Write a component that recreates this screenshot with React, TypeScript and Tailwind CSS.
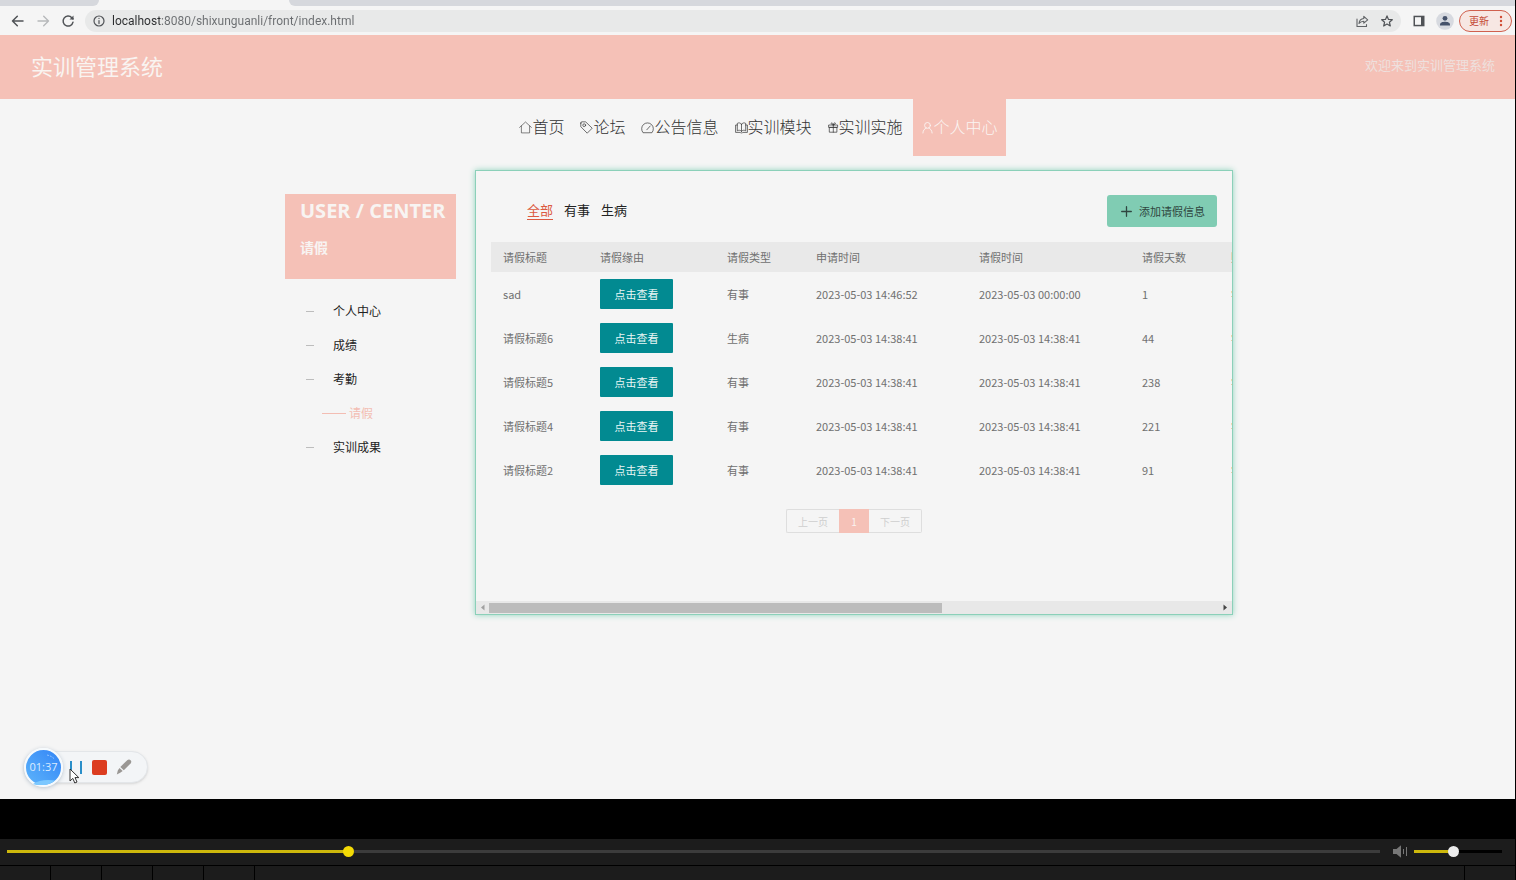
import React from "react";

type IconProps = { className?: string };

const stroke = {
  fill: "none",
  stroke: "currentColor",
  strokeLinecap: "round" as const,
  strokeLinejoin: "round" as const,
};

const HomeIcon = ({ className }: IconProps) => (
  <svg viewBox="0 0 13 13" className={className} {...stroke} strokeWidth="0.6" aria-hidden="true">
    <path d="M0.6 6.4 6.5 1l5.9 5.4M2.4 5v6.9h8.2V5" />
  </svg>
);
const TagIcon = ({ className }: IconProps) => (
  <svg viewBox="0 0 13 13" className={className} {...stroke} strokeWidth="0.7" aria-hidden="true">
    <path d="M0.8 2.1v3.6l6.4 6.5 5-5L5.700 0.900 2 0.800a1.200 1.200 0 0 0-1.200 1.300Z" />
    <circle cx="4.200" cy="4.200" r="1.400" />
  </svg>
);
const GaugeIcon = ({ className }: IconProps) => (
  <svg viewBox="0 0 13 13" className={className} {...stroke} strokeWidth="0.7" aria-hidden="true">
    <path d="M1.800 11.400A5.900 5.900 0 1 1 11.200 11.400ZM5.800 8.800 9.200 5" />
  </svg>
);
const BookIcon = ({ className }: IconProps) => (
  <svg viewBox="0 0 13 13" className={className} {...stroke} strokeWidth="0.7" aria-hidden="true">
    <path d="M6.500 3.200C5.500 1.600 3.500 1.600 2.300 2.400v7.400c1.300-.8 3.200-.8 4.200.6 1-1.400 2.900-1.400 4.200-.6V2.400C9.500 1.600 7.500 1.600 6.500 3.200ZM6.500 3.200v7.200M2.300 4H.6v7.400h4.600c.4.700 2.200.7 2.600 0h4.600V4h-1.700" />
  </svg>
);
const GiftIcon = ({ className }: IconProps) => (
  <svg viewBox="0 0 11 13" className={className} {...stroke} strokeWidth="0.7" aria-hidden="true">
    <path d="M1 4h8.600v2.400H1ZM1.700 6.400h7.200v4.800H1.700ZM5.300 4v7.200M5.300 4C3.800 3.800 2.800 2.900 3.300 2c.8-.8 1.800.6 2 2 .2-1.400 1.200-2.800 2-2 .5.900-.5 1.800-2 2" />
  </svg>
);
const UserIcon = ({ className }: IconProps) => (
  <svg viewBox="0 0 13 13" className={className} {...stroke} strokeWidth="0.9" aria-hidden="true">
    <circle cx="6.500" cy="4.400" r="2.900" />
    <path d="M1.900 12C2.100 9.200 3.500 7.700 5.300 7M7.700 7c1.800.7 3.200 2.200 3.400 5" />
  </svg>
);

const navItems = [
  { label: "首页", icon: <HomeIcon className="mt-1 h-[13px] w-[13px]" /> },
  { label: "论坛", icon: <TagIcon className="mt-1 h-[13px] w-[13px]" /> },
  { label: "公告信息", icon: <GaugeIcon className="mt-1 h-[13px] w-[13px]" /> },
  { label: "实训模块", icon: <BookIcon className="mt-1 h-[13px] w-[13px]" /> },
  { label: "实训实施", icon: <GiftIcon className="mt-1 h-[13px] w-[11px]" /> },
  { label: "个人中心", icon: <UserIcon className="mt-1 h-[13px] w-[13px]" />, active: true },
];

const sideItems = [
  { label: "个人中心" },
  { label: "成绩" },
  { label: "考勤" },
  { label: "请假", active: true },
  { label: "实训成果" },
];

const columns = ["请假标题", "请假缘由", "请假类型", "申请时间", "请假时间", "请假天数", "账号"];

const rows = [
  ["sad", "有事", "2023-05-03 14:46:52", "2023-05-03 00:00:00", "1", "学生"],
  ["请假标题6", "生病", "2023-05-03 14:38:41", "2023-05-03 14:38:41", "44", "学生"],
  ["请假标题5", "有事", "2023-05-03 14:38:41", "2023-05-03 14:38:41", "238", "学生"],
  ["请假标题4", "有事", "2023-05-03 14:38:41", "2023-05-03 14:38:41", "221", "学生"],
  ["请假标题2", "有事", "2023-05-03 14:38:41", "2023-05-03 14:38:41", "91", "学生"],
];

function BrowserBar() {
  return (
    <div className="bg-[#f5f5f5]">
      <div className="flex h-1.5">
        <div className="w-[99px] rounded-br-md bg-[#d6d8dd]" />
        <div className="w-[190px]" />
        <div className="flex-1 rounded-bl-md bg-[#d6d8dd]" />
      </div>
      <div className="flex h-[29px] items-center pr-[3px] pl-[11px]">
        <button aria-label="后退" className="text-[#505357]">
          <svg viewBox="0 0 14 14" className="h-[14px] w-[14px]" {...stroke} strokeWidth="1.500" aria-hidden="true">
            <path d="M12 7H1.500M6.300 2.200 1.500 7l4.800 4.800" />
          </svg>
        </button>
        <button aria-label="前进" className="ml-3 text-[#b7b9bb]">
          <svg viewBox="0 0 14 14" className="h-[14px] w-[14px]" {...stroke} strokeWidth="1.400" aria-hidden="true">
            <path d="M1 7h10.500M6.700 2.200 11.500 7l-4.800 4.800" />
          </svg>
        </button>
        <button aria-label="重新加载" className="ml-[10px] text-[#505357]">
          <svg viewBox="0 0 14 14" className="h-[14px] w-[14px]" {...stroke} strokeWidth="1.500" aria-hidden="true">
            <path d="M12 8.200A5 5 0 1 1 10.800 3.700L12 4.900" />
            <path d="M12.500 1.500v4H8.500Z" fill="currentColor" stroke="none" />
          </svg>
        </button>
        <div className="ml-[10px] flex h-[22px] flex-1 items-center rounded-full bg-[#e8e9e9] pr-2 pl-2">
          <svg viewBox="0 0 12 12" className="h-3 w-3 shrink-0 text-[#505357]" {...stroke} strokeWidth="1.200" aria-hidden="true">
            <circle cx="6" cy="6" r="5" />
            <path d="M6 5.600v3M6 3.400v.1" />
          </svg>
          <input
            aria-label="地址栏"
            defaultValue="localhost:8080/shixunguanli/front/index.html"
            className="ml-[7px] min-w-0 flex-1 bg-[linear-gradient(to_right,#2a2c2e_48px,#6a6d70_48px)] bg-clip-text font-['Roboto',sans-serif] text-[12px] leading-5 text-transparent outline-none"
          />
          <button aria-label="分享" className="text-[#606366]">
            <svg viewBox="0 0 14 14" className="h-[14px] w-[14px]" {...stroke} strokeWidth="1.100" aria-hidden="true">
              <path d="M2 5v7.500h9.500v-2" />
              <path d="M4 9.500c.3-3 2-4.800 4.800-5V2.300L12.700 5.800 8.800 9.200V7.200C6.800 7.200 5.300 7.800 4 9.500Z" />
            </svg>
          </button>
          <button aria-label="收藏" className="ml-3 text-[#505357]">
            <svg viewBox="0 0 12 12" className="h-3 w-3" {...stroke} strokeWidth="1.200" aria-hidden="true">
              <path d="m6 .9 1.500 3.500 3.800.3-2.900 2.500.9 3.800L6 9l-3.300 2 .9-3.800L.7 4.700l3.800-.3Z" />
            </svg>
          </button>
        </div>
        <button aria-label="侧边栏" className="ml-3 text-[#505357]">
          <svg viewBox="0 0 12 12" className="h-3 w-3" aria-hidden="true">
            <path d="M.5.700h11v10.600H.5Z" fill="currentColor" />
            <path d="M2 2.200h6v7.600H2Z" fill="#f5f5f5" />
          </svg>
        </button>
        <button aria-label="个人资料" className="ml-[11px] text-[#46536b]">
          <svg viewBox="0 0 18 18" className="h-[18px] w-[18px]" aria-hidden="true">
            <circle cx="9" cy="9" r="8.800" fill="#d7dae0" />
            <circle cx="9" cy="6.300" r="2.400" fill="currentColor" />
            <path d="M4 12.800c0-2.400 2.500-3.100 5-3.100s5 .7 5 3.100v.7H4Z" fill="currentColor" />
          </svg>
        </button>
        <button className="ml-[5px] flex h-[22px] w-[53px] items-center justify-between rounded-full border border-[#d0604e] bg-[#f7e7e3] pr-2 pl-[9px] text-[10px] text-[#c44a36]">
          更新
          <svg viewBox="0 0 4 12" className="h-3 w-1" fill="#d04a33" aria-hidden="true">
            <circle cx="2" cy="2" r="1.200" />
            <circle cx="2" cy="6" r="1.200" />
            <circle cx="2" cy="10" r="1.200" />
          </svg>
        </button>
      </div>
    </div>
  );
}

function Sidebar() {
  return (
    <aside className="mt-6 w-[171px] shrink-0">
      <div className="h-[85px] bg-[#f5c1b7] pl-[15px] text-[#f8f4f2]">
        <h2 className="pt-[3px] font-['Open_Sans',sans-serif] text-[20px] leading-7 font-bold whitespace-nowrap">USER / CENTER</h2>
        <p className="mt-[10px] text-[14px] leading-6 font-bold">请假</p>
      </div>
      <ul className="mt-[15px] text-[12px]">
        {sideItems.map((item) => (
          <li key={item.label} className="flex h-[34px] items-center">
            {item.active ? (
              <a href="#" className="flex items-center pl-[37px] text-[#f3bdb3]">
                <span className="mr-[3px] h-px w-6 bg-[#f3bdb3]" />
                {item.label}
              </a>
            ) : (
              <a href="#" className="flex items-center pl-[21px] text-[#222]">
                <span className="mr-[19px] h-px w-2 bg-[#bdbdbd]" />
                {item.label}
              </a>
            )}
          </li>
        ))}
      </ul>
    </aside>
  );
}

function LeaveTable() {
  return (
    <table className="w-[1190px] table-fixed text-left text-[11px] leading-4 text-[#707070]">
      <colgroup>
        <col className="w-[97px]" />
        <col className="w-[127px]" />
        <col className="w-[89px]" />
        <col className="w-[163px]" />
        <col className="w-[163px]" />
        <col className="w-[89px]" />
        <col />
      </colgroup>
      <thead>
        <tr className="h-[30px] bg-[#e9e9e9]">
          {columns.map((c) => (
            <th key={c} className="px-3 font-normal">{c}</th>
          ))}
        </tr>
      </thead>
      <tbody>
        {rows.map(([title, kind, applied, leave, days, account]) => (
          <tr key={title} className="h-[44px]">
            <td className="px-3">{title}</td>
            <td className="px-3">
              <button className="block h-[30px] w-[73px] rounded-[1px] bg-[#028a91] text-[#eaf6f5]">点击查看</button>
            </td>
            <td className="px-3">{kind}</td>
            <td className="px-3">{applied}</td>
            <td className="px-3">{leave}</td>
            <td className="px-3">{days}</td>
            <td className="px-3">{account}</td>
          </tr>
        ))}
      </tbody>
    </table>
  );
}

function Panel() {
  return (
    <section className="ml-[19px] flex min-w-0 flex-1 flex-col border border-[#8bd0b9] shadow-[0_0_6px_#8fd3bd]">
      <div className="flex items-center justify-between pt-6 pr-[15px] pl-[51px]">
        <div className="flex gap-[11px] pb-0.5 text-[13px] leading-[18px] text-[#222]">
          <button className="border-b border-[#dc5a41] text-[#dc5a41]">全部</button>
          <button className="border-b border-transparent">有事</button>
          <button className="border-b border-transparent">生病</button>
        </div>
        <button className="flex h-8 items-center rounded-[3px] bg-[#80ccb3] pr-3 pl-[14px] text-[11px] text-[#2f4640]">
          <svg viewBox="0 0 11 11" className="mr-[7px] h-[11px] w-[11px]" {...stroke} strokeWidth="1.300" aria-hidden="true">
            <path d="M5.500.7v9.600M.7 5.500h9.600" />
          </svg>
          添加请假信息
        </button>
      </div>
      <div className="mt-[15px] overflow-hidden pl-[15px]">
        <LeaveTable />
      </div>
      <nav aria-label="分页" className="mt-[17px] flex justify-center text-[10px] text-[#cfcfcf]">
        <button className="h-6 w-[53px] rounded-l-[2px] border border-r-0 border-[#dedede]">上一页</button>
        <button className="h-6 w-[30px] bg-[#f5c1b7] text-[#faf3f1]">1</button>
        <button className="h-6 w-[53px] rounded-r-[2px] border border-l-0 border-[#dedede]">下一页</button>
      </nav>
      <div className="mt-[68px] flex h-[13px] items-center bg-[#e8e8e8] px-1">
        <svg viewBox="0 0 5 7" className="h-[7px] w-[5px] text-[#a0a0a0]" fill="currentColor" aria-hidden="true">
          <path d="M4.500.5v6L1 3.500Z" />
        </svg>
        <div className="mx-1 flex-1">
          <div className="h-[10px] w-[62%] bg-[#bcbcbc]" />
        </div>
        <svg viewBox="0 0 5 7" className="h-[7px] w-[5px] text-[#444]" fill="currentColor" aria-hidden="true">
          <path d="M.5.500v6L4 3.500Z" />
        </svg>
      </div>
    </section>
  );
}

function Recorder() {
  return (
    <div className="absolute bottom-3 left-6 flex h-10 items-center">
      <div className="flex h-8 w-[124px] items-center rounded-full border border-[#e3e6e9] bg-[#f3f5f7] pl-[45px] shadow-sm">
        <button aria-label="暂停" className="flex h-[13px] w-3 justify-between">
          <span className="w-[2px] bg-[#2b8fc9]" />
          <span className="w-[2px] bg-[#2b8fc9]" />
        </button>
        <button aria-label="停止" className="ml-[10px] h-[15px] w-[15px] rounded-[2px] bg-[#dc3d20]" />
        <button aria-label="画笔" className="ml-[9px] text-[#9a9794]">
          <svg viewBox="0 0 16 16" className="h-4 w-4" fill="currentColor" aria-hidden="true">
            <path d="M11.200 1.200c1.200-1.100 2.500-1 3.400 0s1 2.100 0 3.300L7.800 11.200 4.300 7.900Z" />
            <path d="m3.500 8.900 3.200 3.100-2.500 1.800L.8 15.400 1.800 11.400Z" />
          </svg>
        </button>
      </div>
      <div className="absolute left-0 flex h-[39px] w-[39px] items-center justify-center rounded-full border-2 border-[#f6fafd] bg-[linear-gradient(to_top_right,#5db4fb,#3385f6)] text-[11px] text-[#dcecff] shadow-[0_1px_4px_#b9c4cf]">
        <svg viewBox="0 0 35 35" className="absolute h-[35px] w-[35px]" fill="none" aria-hidden="true">
          <path d="M7 34C12 30.500 20 29 29 30.500 24 35 14 37 7 34Z" fill="#7cc8ff" />
          <path d="M21 5c3 .6 5.500 2 7.500 4" stroke="#8fc3ff" strokeDasharray="2 1" />
        </svg>
        <span className="relative font-['Open_Sans',sans-serif]">01:37</span>
      </div>
      <svg viewBox="0 0 12 17" className="absolute top-[21px] left-[45px] h-[17px] w-3" aria-hidden="true">
        <path d="M1 1v12l2.800-2.600 2 4.600 2.200-1-2-4.400h3.800Z" fill="#fff" stroke="#333" strokeWidth="1" />
      </svg>
    </div>
  );
}

function Player() {
  return (
    <footer>
      <div className="flex h-[26px] items-center bg-[#1c1c1c] pr-[13px] pb-0.5 pl-[7px]">
        <input
          type="range"
          aria-label="播放进度"
          min={0}
          max={1000}
          defaultValue={247}
          className="h-3 min-w-0 flex-1 appearance-none bg-transparent [&::-webkit-slider-runnable-track]:h-[3px] [&::-webkit-slider-runnable-track]:bg-[linear-gradient(to_right,#cdb80c_25%,#3c3c3c_25%)] [&::-webkit-slider-thumb]:-mt-1 [&::-webkit-slider-thumb]:h-[11px] [&::-webkit-slider-thumb]:w-[11px] [&::-webkit-slider-thumb]:appearance-none [&::-webkit-slider-thumb]:rounded-full [&::-webkit-slider-thumb]:bg-[#f3da05]"
        />
        <button aria-label="静音" className="ml-[13px] text-[#777]">
          <svg viewBox="0 0 15 13" className="h-[13px] w-[15px]" aria-hidden="true">
            <path d="M0 4h3.500L8 .3v12.400L3.500 9H0Z" fill="currentColor" />
            <path d="M10.500 4v5M13.500 2v9" stroke="currentColor" strokeWidth="1" />
          </svg>
        </button>
        <input
          type="range"
          aria-label="音量"
          defaultValue={44}
          className="ml-[6px] h-3 w-[88px] appearance-none bg-transparent [&::-webkit-slider-runnable-track]:h-[3px] [&::-webkit-slider-runnable-track]:bg-[linear-gradient(to_right,#cdb80c_44%,#000_44%)] [&::-webkit-slider-thumb]:-mt-1 [&::-webkit-slider-thumb]:h-[11px] [&::-webkit-slider-thumb]:w-[11px] [&::-webkit-slider-thumb]:appearance-none [&::-webkit-slider-thumb]:rounded-full [&::-webkit-slider-thumb]:bg-[#ececec]"
        />
      </div>
      <div className="mt-px flex h-[14px] gap-px">
        <div className="w-[50px] bg-[#1c1c1c]" />
        <div className="w-[50px] bg-[#1c1c1c]" />
        <div className="w-[50px] bg-[#1c1c1c]" />
        <div className="w-[50px] bg-[#1c1c1c]" />
        <div className="w-[50px] bg-[#1c1c1c]" />
        <div className="flex-1 bg-[#1c1c1c]" />
        <div className="w-[50px] bg-[#1c1c1c]" />
      </div>
    </footer>
  );
}

export default function App() {
  return (
    <div className="flex min-h-screen flex-col bg-black pr-px font-['Noto_Sans_CJK_SC',sans-serif]">
      <BrowserBar />
      <div className="relative flex-1 bg-[#f5f5f5]">
        <header className="flex h-16 items-center justify-between bg-[#f5c1b7] pr-5 pb-1 pl-[31px]">
          <h1 className="text-[22px] leading-8 text-[#f9f4f1]">实训管理系统</h1>
          <p className="text-[13px] leading-5 text-[#eee0de]">欢迎来到实训管理系统</p>
        </header>
        <nav aria-label="主导航">
          <ul className="flex justify-center pl-0.5 text-[16px] leading-6">
            {navItems.map((item) => (
              <li key={item.label}>
                <a
                  href="#"
                  className={
                    item.active
                      ? "ml-0.5 flex h-[57px] items-center bg-[#f5c1b7] px-2 pb-1 font-light text-[#faf5f3]"
                      : "flex h-[57px] items-center px-2 pb-1 font-light text-[#333]"
                  }
                >
                  {item.icon}
                  {item.label}
                </a>
              </li>
            ))}
          </ul>
        </nav>
        <div className="pl-[3px]">
          <main className="mx-auto mt-[14px] flex max-w-[948px] items-start">
            <Sidebar />
            <Panel />
          </main>
        </div>
        <Recorder />
      </div>
      <div className="h-10" />
      <Player />
    </div>
  );
}
